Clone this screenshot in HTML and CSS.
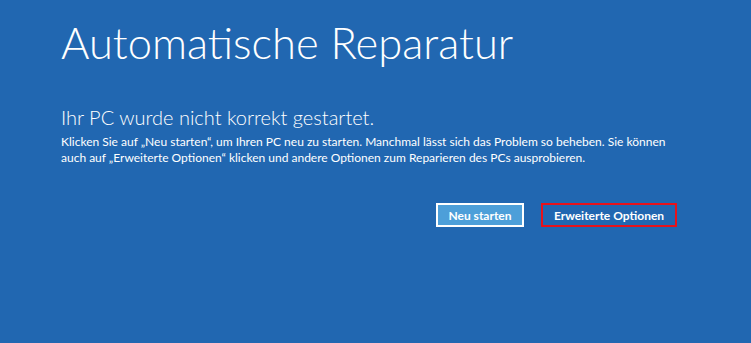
FILE: index.html
```html
<!DOCTYPE html>
<html lang="de">
<head>
    <meta charset="UTF-8">
    <title>Automatische Reparatur</title>
    <link rel="stylesheet" href="styles.css">
</head>
<body>
<div class="screen">
    <h1 class="title">Automatische Reparatur</h1>
    <h2 class="subtitle">Ihr PC wurde nicht korrekt gestartet.</h2>
    <p class="text">Klicken Sie auf „Neu starten“, um Ihren PC neu zu starten. Manchmal lässt sich das Problem so beheben. Sie können auch auf „Erweiterte Optionen“ klicken und andere Optionen zum Reparieren des PCs ausprobieren.</p>
    <div class="buttons">
        <button class="btn btn-primary">Neu starten</button>
        <button class="btn btn-marked">Erweiterte Optionen</button>
    </div>
</div>
</body>
</html>
```

FILE: styles.css
```css
html, body {
    margin: 0;
    padding: 0;
    height: 100%;
}
body {
    background: #2167b1;
    color: #fff;
    font-family: Lato, "Open Sans", sans-serif;
}
.screen {
    padding: 12px 0 0 61px;
    width: 616px;
}
.title {
    margin: 0;
    font-size: 43.5px;
    font-weight: 300;
    line-height: 60px;
}
.subtitle {
    margin: 32px 0 0 0;
    font-size: 20px;
    font-weight: 300;
    line-height: 26px;
}
.text {
    margin: 4px 0 0 0;
    width: 616px;
    font-size: 12px;
    line-height: 16px;
}
.buttons {
    display: flex;
    justify-content: flex-end;
    gap: 17px;
    margin-top: 37px;
}
.btn {
    font-family: Lato, "Open Sans", sans-serif;
    font-size: 12px;
    font-weight: 700;
    color: #fff;
    height: 24px;
    padding: 0;
    border: 2px solid;
    white-space: nowrap;
    cursor: pointer;
}
.btn-primary {
    background: #4d9fd9;
    border-color: #fff;
    width: 88px;
}
.btn-marked {
    background: #2167b1;
    border-color: #e8121b;
    width: 136px;
}
```
